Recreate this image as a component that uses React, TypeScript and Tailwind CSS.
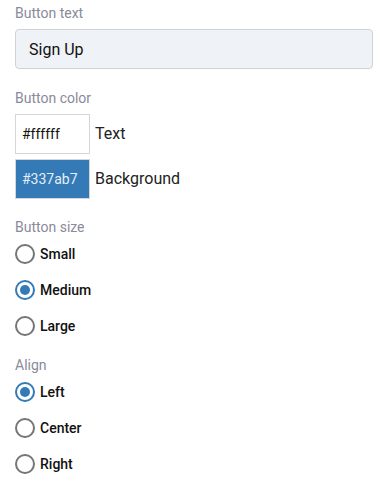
import { useState } from 'react';

const SIZES = ['Small', 'Medium', 'Large'];
const ALIGNS = ['Left', 'Center', 'Right'];

function Radio({ label, checked, onClick }: { label: string; checked: boolean; onClick: () => void }) {
  return (
    <label className="flex items-center h-9 cursor-pointer" onClick={onClick}>
      <span
        className={`w-[20px] h-[20px] rounded-full border-2 flex items-center justify-center ${
          checked ? 'border-[#337ab7]' : 'border-[#757575]'
        }`}
      >
        {checked && <span className="w-[10px] h-[10px] rounded-full bg-[#337ab7]" />}
      </span>
      <span className="ml-[5px] text-[14px] font-medium text-[#111]">{label}</span>
    </label>
  );
}

export default function App() {
  const [text, setText] = useState('Sign Up');
  const [size, setSize] = useState('Medium');
  const [align, setAlign] = useState('Left');

  return (
    <div className="w-[382px] h-[487px] bg-white pl-[15px] pr-[9px] pt-[4px] font-['Roboto',sans-serif]">
      <p className="text-[14px] text-[#8a8a99] leading-[18px]">Button text</p>
      <input
        value={text}
        onChange={(e) => setText(e.target.value)}
        className="mt-[7px] w-full h-[40px] px-[13px] rounded-[4px] border border-[#cfd2d6] bg-[#eff2f7] text-[16px] text-[#111] outline-none"
      />

      <p className="mt-[20px] text-[14px] text-[#8a8a99] leading-[18px]">Button color</p>
      <div className="mt-[7px] flex flex-col gap-[5px]">
        <div className="flex items-center">
          <div className="w-[75px] h-[40px] border border-[#d6d6d6] bg-white flex items-center pl-[6px] text-[14px] text-[#111]">
            #ffffff
          </div>
          <span className="ml-[5px] text-[16px] text-[#222]">Text</span>
        </div>
        <div className="flex items-center">
          <div className="w-[75px] h-[40px] border border-[#d6d6d6] bg-[#337ab7] flex items-center pl-[6px] text-[14px] text-[#e6eef6]">
            #337ab7
          </div>
          <span className="ml-[5px] text-[16px] text-[#222]">Background</span>
        </div>
      </div>

      <p className="mt-[19px] text-[14px] text-[#8a8a99] leading-[18px]">Button size</p>
      <div className="flex flex-col">
        {SIZES.map((s) => (
          <Radio key={s} label={s} checked={size === s} onClick={() => setSize(s)} />
        ))}
      </div>

      <p className="mt-[12px] text-[14px] text-[#8a8a99] leading-[18px]">Align</p>
      <div className="flex flex-col">
        {ALIGNS.map((a) => (
          <Radio key={a} label={a} checked={align === a} onClick={() => setAlign(a)} />
        ))}
      </div>
    </div>
  );
}
